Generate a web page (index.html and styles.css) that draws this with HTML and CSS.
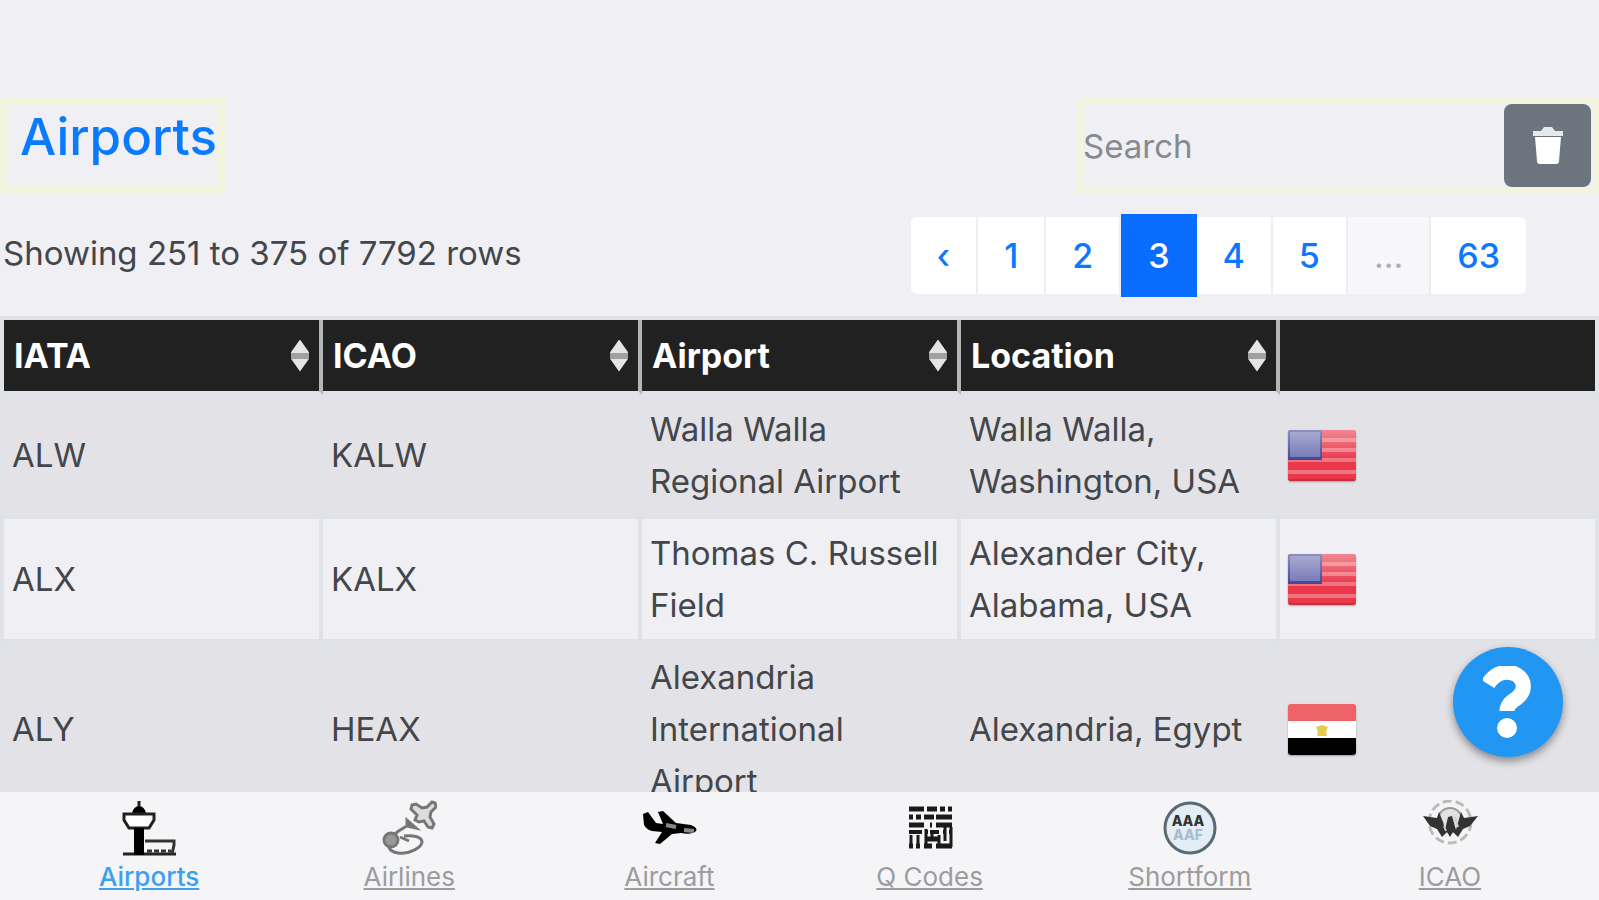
FILE: index.html
```html
<!DOCTYPE html>
<html lang="en">
<head>
	<meta charset="utf-8">
	<meta name="viewport" content="width=device-width, initial-scale=1">
	<title>Airports</title>
	<link rel="stylesheet" href="styles.css">
</head>
<body>
	<header class="toolbar">
		<h1 class="title">Airports</h1>
		<form class="search">
			<input type="search" class="search-input" placeholder="Search" aria-label="Search">
			<button type="reset" class="btn-clear" aria-label="Clear search">
				<svg viewBox="0 0 32 38" width="32" height="38" fill="#fff">
					<path d="M1 4h8l3-4h8l3 4h8v5H1z" fill="#e6e9ec"/>
					<path d="M3 10h26l-2 24q0 3-3 3H8q-3 0-3-3z"/>
				</svg>
			</button>
		</form>
	</header>

	<main>
		<div class="pager">
			<span class="info">Showing 251 to 375 of 7792 rows</span>
			<nav class="pagination" aria-label="Pages">
				<a class="page" href="#">‹</a>
				<a class="page" href="#">1</a>
				<a class="page" href="#">2</a>
				<a class="page active" href="#">3</a>
				<a class="page" href="#">4</a>
				<a class="page" href="#">5</a>
				<span class="page disabled">...</span>
				<a class="page" href="#">63</a>
			</nav>
		</div>

		<table class="table">
			<thead>
				<tr>
					<th class="sortable">IATA</th>
					<th class="sortable">ICAO</th>
					<th class="sortable">Airport</th>
					<th class="sortable">Location</th>
					<th></th>
				</tr>
			</thead>
			<tbody>
				<tr>
					<td>ALW</td>
					<td>KALW</td>
					<td>Walla Walla Regional Airport</td>
					<td>Walla Walla, Washington, USA</td>
					<td><svg class="flag" viewBox="0 0 68 51"><use href="#flag-us"/></svg></td>
				</tr>
				<tr>
					<td>ALX</td>
					<td>KALX</td>
					<td>Thomas C. Russell Field</td>
					<td>Alexander City, Alabama, USA</td>
					<td><svg class="flag" viewBox="0 0 68 51"><use href="#flag-us"/></svg></td>
				</tr>
				<tr>
					<td>ALY</td>
					<td>HEAX</td>
					<td>Alexandria International Airport</td>
					<td>Alexandria, Egypt</td>
					<td><svg class="flag" viewBox="0 0 68 51"><use href="#flag-eg"/></svg></td>
				</tr>
			</tbody>
		</table>
	</main>

	<button type="button" class="help" aria-label="Help">
		<svg viewBox="0 0 50 72" width="50" height="72">
			<path d="M5 18C13 5 26 4 34 9c9 6 8 17 0 23-6 4-10 7-10 13" fill="none" stroke="#fff" stroke-width="15"/>
			<circle cx="24" cy="62" r="10" fill="#fff"/>
		</svg>
	</button>

	<nav class="tabs">
		<a class="tab active" href="#">
			<svg class="icon" viewBox="0 0 56 56">
				<path d="M18 1v5M2 54h53" stroke="#222" stroke-width="3"/>
				<path d="M11 15c0-6 4-9 7-9s7 3 7 9z"/>
				<path d="M3 14h30v6l-5 8H8l-5-8z" fill="#fff" stroke="#222" stroke-width="3"/>
				<path d="M13 28h10v27H13z"/>
				<path d="M24 41h29v4l-2 9" fill="none" stroke="#333" stroke-width="3"/>
				<path d="M26 51h24" stroke="#333" stroke-width="3" stroke-dasharray="5 2"/>
			</svg>
			<span>Airports</span>
		</a>
		<a class="tab" href="#">
			<svg class="icon" viewBox="0 0 56 56" fill="none" stroke="#777" stroke-width="3">
				<path d="M31 5l4-1 6 4 5-1 5-5 3 1 1 4-5 5-1 5 4 7-2 4-4-1-4-6-5 1-4-2 2-5-6-6z" fill="#ddd"/>
				<path d="M26 20l9 8-9-2z" fill="#666"/>
				<circle cx="10" cy="40" r="7" fill="#999"/>
				<path d="M14 34c6-6 9-5 11-8M23 36c10-1 18 1 18 6S28 55 17 53 8 45 8 45M19 37l9 4"/>
			</svg>
			<span>Airlines</span>
		</a>
		<a class="tab" href="#">
			<svg class="icon" viewBox="0 0 56 56">
				<path d="M2 14l5-2 8 11 7 1-5-12 5-1 13 12 15 2q7 3 5 6-4 4-15 2l-9 1-12 10-5-1 7-11-10-1q-5-1-8-6z"/>
				<path d="M25 25l10 2M43 30l10 1" stroke="#888" stroke-width="4"/>
			</svg>
			<span>Aircraft</span>
		</a>
		<a class="tab" href="#">
			<svg class="icon" viewBox="0 0 56 56" stroke="#1a1a1a" stroke-width="5">
				<path d="M7 9h15M25 9h10M38 9h5M46 9h4"/>
				<path d="M7 17h4M14 17h5M22 17h10M34 17h16"/>
				<path d="M7 25h15M28 25h2M34 25h16"/>
				<path d="M7 32h13M24 32h2M28 32h9M41 32h2M47 32h3" stroke-width="4"/>
				<path d="M9 35v13M16 35v13M24 29v19M30 33v5M37 35v13M43 27v14M49 27v20" stroke-width="3"/>
				<path d="M24 39h12M7 46h4M14 46h4M22 46h8M34 46h16"/>
			</svg>
			<span>Q Codes</span>
		</a>
		<a class="tab" href="#">
			<svg class="icon" viewBox="0 0 56 56">
				<circle cx="28" cy="28" r="25" fill="#e3edf5" stroke="#5a6a74" stroke-width="3"/>
				<text class="code" x="26" y="26">AAA</text>
				<text class="code code-light" x="26" y="40">AAF</text>
			</svg>
			<span>Shortform</span>
		</a>
		<a class="tab" href="#">
			<svg class="icon" viewBox="0 0 56 56">
				<circle cx="28" cy="22" r="21" fill="none" stroke="#bbb" stroke-width="3" stroke-dasharray="9 4"/>
				<circle cx="28" cy="20" r="12" fill="#e2e2e4" stroke="#999" stroke-width="2"/>
				<path d="M1 16l14 2 2-6 4 10 2 8 3-13 4-1 4 14 5-18 3 6 14-2-8 10-7 3-5 8-5-5-3 5-3-5-5 5-5-8-7-3z" fill="#333"/>
				<path d="M33 17l3 10M22 26l2 5" stroke="#ccc" stroke-width="2"/>
			</svg>
			<span>ICAO</span>
		</a>
	</nav>

	<!-- flags used in the table -->
	<svg class="sprite" width="0" height="0">
		<defs>
			<linearGradient id="shine" x1="0" y1="0" x2="0" y2="1">
				<stop offset="0" stop-color="#fff" stop-opacity=".4"/>
				<stop offset=".6" stop-color="#fff" stop-opacity="0"/>
			</linearGradient>
			<symbol id="flag-us" viewBox="0 0 68 51">
				<rect width="68" height="51" fill="#e8384a"/>
				<path d="M0 10h68M0 20h68M0 30h68M0 42h68" stroke="#f07480" stroke-width="4"/>
				<rect width="34" height="30" fill="#3f4698"/>
				<rect x="2" y="2" width="30" height="25" fill="#7376b4"/>
				<rect width="68" height="51" fill="url(#shine)"/>
				<path d="M0 50h68" stroke="#c62f3f" stroke-width="2"/>
			</symbol>
			<symbol id="flag-eg" viewBox="0 0 68 51">
				<rect width="68" height="17" fill="#ee6368"/>
				<rect y="17" width="68" height="17" fill="#fff"/>
				<rect y="34" width="68" height="17"/>
				<path d="M28 23l6-2 6 2-2 5 1 4H29l1-4z" fill="#e6cb4c"/>
			</symbol>
		</defs>
	</svg>
</body>
</html>
```
FILE: styles.css
```css
* {
	box-sizing: border-box;
}

body {
	margin: 0;
	padding-top: 98px;
	background-color: #efeff4;
	color: #43464a;
	font-family: Inter, "Liberation Sans", sans-serif;
	font-size: 33px;
	line-height: 52px;
}

a {
	color: #0d78ff;
	text-decoration: none;
}

.toolbar {
	display: flex;
	justify-content: space-between;
	height: 95px;
}

.title {
	margin: 0;
	padding: 0 0 0 12px;
	border: 8px solid #f3f4de;
	color: #0a7aff;
	font-size: 51px;
	font-weight: 500;
	line-height: 62px;
}

.search {
	display: flex;
	align-items: center;
	width: 522px;
	border: 6px solid #f3f4de;
}

.search-input {
	flex: 1;
	min-width: 0;
	height: 83px;
	padding: 0;
	border: 0;
	outline: 0;
	background: transparent;
	font: inherit;
}

.search-input::placeholder {
	color: #868b91;
	opacity: 1;
}

.btn-clear {
	display: flex;
	align-items: center;
	justify-content: center;
	width: 87px;
	height: 83px;
	margin-right: 2px;
	padding: 0;
	border: 0;
	border-radius: 8px;
	background-color: #6c757d;
	cursor: pointer;
}

/* Row above the table */
.pager {
	display: flex;
	align-items: center;
	justify-content: space-between;
	height: 83px;
	margin: 21px 73px 19px 3px;
}

.info {
	padding-bottom: 6px;
}

.pagination {
	display: flex;
	align-items: center;
}

.page {
	height: 77px;
	padding: 0 26px;
	border-right: 2px solid #eceef2;
	background-color: #fff;
	font-size: 34px;
	font-weight: 500;
	line-height: 77px;
}

.page:first-child {
	border-radius: 6px 0 0 6px;
}

.page:last-child {
	border-right: 0;
	border-radius: 0 6px 6px 0;
}

.page.active {
	height: 83px;
	padding: 0 27px;
	border-right: 0;
	background-color: #0a6cff;
	color: #fff;
	line-height: 83px;
}

.page.disabled {
	background-color: #f7f7fa;
	color: #adb1b6;
	font-weight: 400;
}

.table {
	width: 100%;
	border: 4px solid #dfe2e6;
	border-width: 4px 0 0 4px;
	border-spacing: 0;
	table-layout: fixed;
}

.table th,
.table td {
	padding: 8px;
	border: 4px solid #dfe2e6;
	border-width: 0 4px 4px 0;
	text-align: left;
	vertical-align: middle;
}

.table th {
	height: 75px;
	padding-left: 10px;
	border-right-color: #b4b6b8;
	background-color: #212121;
	color: #fff;
	font-size: 34px;
	font-weight: 700;
}

.table th:last-child {
	border-right-color: #dfe2e6;
}

.table tbody tr:nth-child(odd) {
	background-color: #e2e2e7;
}

/* Up and down arrows on the right of the header cell */
.sortable::after {
	content: "";
	float: right;
	width: 18px;
	height: 32px;
	margin: 10px 2px 0 0;
	background: linear-gradient(#e4e4e4 13px, #a0a0a0 13px, #a0a0a0 19px, #e4e4e4 19px);
	clip-path: polygon(50% 0, 100% 40%, 100% 60%, 50% 100%, 0 60%, 0 40%);
}

.flag {
	display: block;
	width: 68px;
	height: 51px;
	border-radius: 3px;
	box-shadow: 0 1px 2px rgba(0, 0, 0, 0.3);
}

.help {
	position: fixed;
	right: 36px;
	bottom: 143px;
	display: flex;
	align-items: center;
	justify-content: center;
	width: 110px;
	height: 110px;
	padding: 0;
	border: 0;
	border-radius: 50%;
	background-color: #2196f3;
	box-shadow: 0 4px 8px rgba(0, 0, 0, 0.4);
	cursor: pointer;
}

/* Bottom tab bar */
.tabs {
	position: fixed;
	right: 0;
	bottom: 0;
	left: 0;
	display: flex;
	height: 108px;
	padding: 8px 19px 0;
	background-color: #f5f5f7;
}

.tab {
	display: flex;
	flex: 1;
	flex-direction: column;
	align-items: center;
	color: #9c9c9e;
	font-size: 26px;
	line-height: 32px;
	text-decoration: underline;
}

.tab.active {
	color: #3d9ff0;
	font-weight: 500;
}

.icon {
	width: 56px;
	height: 56px;
	margin-bottom: 5px;
}

.code {
	fill: #333;
	font-size: 14px;
	font-weight: 800;
	text-anchor: middle;
}

.code-light {
	fill: #a9bdcc;
}

.sprite {
	position: absolute;
}
```
